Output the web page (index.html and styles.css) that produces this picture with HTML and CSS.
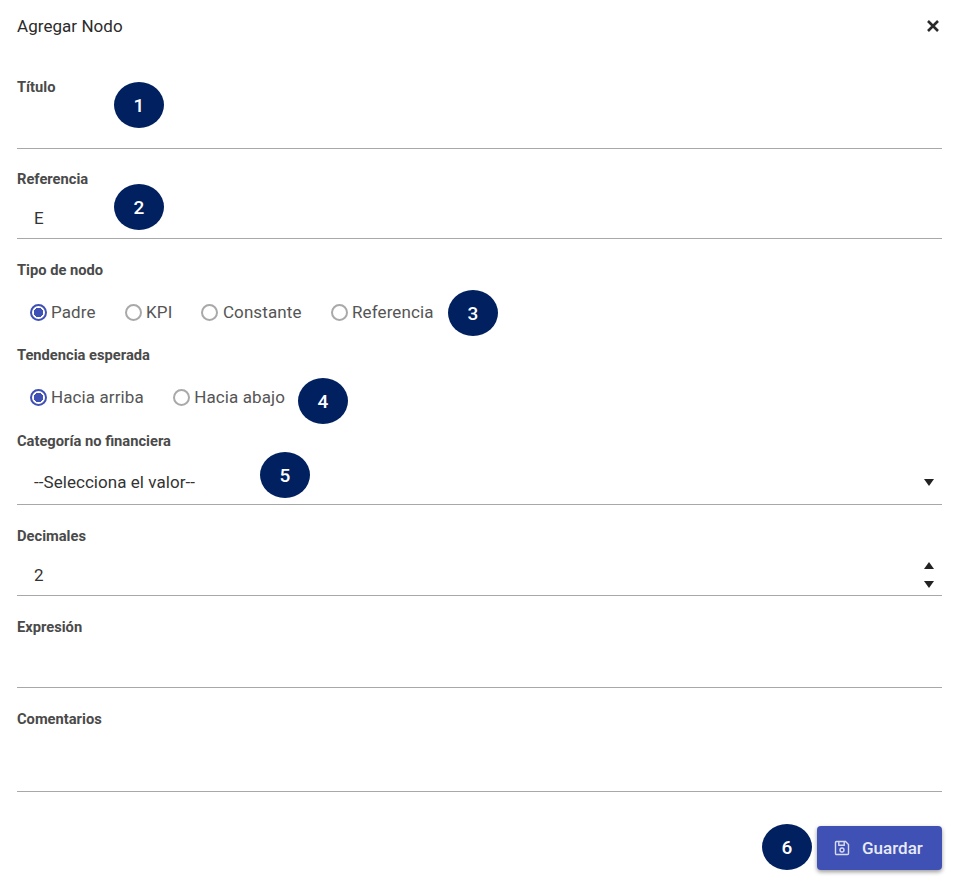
FILE: index.html
```html
<!DOCTYPE html>
<html lang="es">
<head>
<meta charset="utf-8">
<title>Agregar Nodo</title>
<link rel="stylesheet" href="styles.css">
</head>
<body>
<main class="dialog">
  <header class="head">
    <h1 class="title">Agregar Nodo</h1>
    <svg class="close" viewBox="0 0 14 14" width="14" height="14"><path d="M2 2l10 10M12 2L2 12"/></svg>
  </header>

  <section class="field f-titulo">
    <div class="label">Título</div>
    <div class="control"></div>
    <span class="badge b1">1</span>
  </section>

  <section class="field f-ref">
    <div class="label">Referencia</div>
    <div class="control">E</div>
    <span class="badge b2">2</span>
  </section>

  <section class="field f-tipo">
    <div class="label">Tipo de nodo</div>
    <div class="radios">
      <span class="radio on"><i></i>Padre</span>
      <span class="radio"><i></i>KPI</span>
      <span class="radio"><i></i>Constante</span>
      <span class="radio"><i></i>Referencia</span>
    </div>
    <span class="badge b3">3</span>
  </section>

  <section class="field f-tend">
    <div class="label">Tendencia esperada</div>
    <div class="radios">
      <span class="radio on"><i></i>Hacia arriba</span>
      <span class="radio"><i></i>Hacia abajo</span>
    </div>
    <span class="badge b4">4</span>
  </section>

  <section class="field f-cat">
    <div class="label">Categoría no financiera</div>
    <div class="control">--Selecciona el valor--<span class="arrow down"></span></div>
    <span class="badge b5">5</span>
  </section>

  <section class="field f-dec">
    <div class="label">Decimales</div>
    <div class="control">2<span class="spin"><span class="arrow up"></span><span class="arrow down"></span></span></div>
  </section>

  <section class="field f-exp">
    <div class="label">Expresión</div>
    <div class="control"></div>
  </section>

  <section class="field f-com">
    <div class="label">Comentarios</div>
    <div class="control"></div>
  </section>

  <footer class="actions">
    <span class="badge b6">6</span>
    <button class="save" type="button">
      <svg viewBox="0 0 16 16" width="16" height="16"><path d="M2.5 1.5h9l3 3v9a1 1 0 0 1-1 1h-11a1 1 0 0 1-1-1v-11a1 1 0 0 1 1-1z"/><path d="M4.8 1.8v3.4h5.4V1.8"/><circle cx="8" cy="10" r="2"/></svg>
      Guardar
    </button>
  </footer>
</main>
</body>
</html>
```
FILE: styles.css
```css
* { box-sizing: border-box; }
html, body { margin: 0; background: #fff; }
body { font-family: Roboto, "Liberation Sans", sans-serif; color: #333; }
.dialog { position: relative; width: 968px; height: 890px; padding: 0 26px 0 17px; overflow: hidden; }
.head { display: flex; justify-content: space-between; align-items: center; height: 52px; }
.title { margin: 0; font-size: 17px; font-weight: 400; color: #2b2b2b; letter-spacing: 0.05px; }
.close { margin-right: 2px; }
.close path { fill: none; stroke: #2a2a2a; stroke-width: 2.6; }
.field { position: relative; }
.label { height: 18px; line-height: 18px; font-size: 14.7px; font-weight: 700; color: #4a4a4a; }
.control { position: relative; display: flex; align-items: center; padding-left: 17px; font-size: 17px; letter-spacing: 0.05px; color: #333; border-bottom: 1px solid #a8a8a8; }
.f-titulo { margin-top: 26px; }
.f-titulo .control { height: 53px; }
.f-ref { margin-top: 21px; }
.f-ref .control { height: 51px; padding-top: 10px; }
.f-tipo { margin-top: 22px; }
.f-tend { margin-top: 17px; }
.f-cat { margin-top: 18px; }
.f-cat .control { height: 55px; padding-top: 10px; }
.f-dec { margin-top: 22px; }
.f-dec .control { height: 51px; padding-top: 10px; }
.f-exp { margin-top: 22px; }
.f-exp .control { height: 52px; }
.f-com { margin-top: 22px; }
.f-com .control { height: 64px; }
.radios { display: flex; align-items: center; height: 50px; padding: 16px 0 0 12.5px; gap: 29px; font-size: 17px; letter-spacing: 0.1px; color: #555; }
.radio { display: inline-flex; align-items: center; gap: 4.5px; }
.radio i { box-sizing: border-box; width: 17px; height: 17px; border: 2px solid #a9a9a9; border-radius: 50%; background: #fff; }
.radio.on i { border-color: #3f51b5; background: radial-gradient(circle, #3f51b5 0 4.5px, #fff 5px); }
.badge { position: absolute; display: flex; align-items: center; justify-content: center; width: 50px; height: 46px; border-radius: 50%; background: #00205f; color: #fff; font-size: 19px; font-weight: 500; }
.b1 { left: 97px; top: 4px; }
.b2 { left: 97px; top: 14px; }
.b3 { left: 431px; top: 29px; }
.b4 { left: 281px; top: 32px; }
.b5 { left: 243px; top: 20px; }
.b6 { position: static; margin: 0 5px 2px 0; }
.arrow { display: block; width: 0; height: 0; border-left: 5px solid transparent; border-right: 5px solid transparent; }
.arrow.down { border-top: 7px solid #222; }
.arrow.up { border-bottom: 7px solid #222; }
.control > .arrow { position: absolute; right: 8px; top: 29px; }
.spin { position: absolute; right: 8px; top: 17px; display: flex; flex-direction: column; gap: 12px; }
.actions { display: flex; justify-content: flex-end; align-items: center; margin-top: 32px; }
.save { display: flex; align-items: center; gap: 12px; width: 125px; height: 44px; padding: 0 0 0 17px; border: 0; border-radius: 4px; background: #3f51b5; color: #e8eaf6; font-family: inherit; font-size: 17px; font-weight: 500; box-shadow: 0 2px 4px rgba(0,0,0,.4); }
.save svg { flex: none; }
.save path, .save circle { fill: none; stroke: #d6daf0; stroke-width: 1.4; }
```
